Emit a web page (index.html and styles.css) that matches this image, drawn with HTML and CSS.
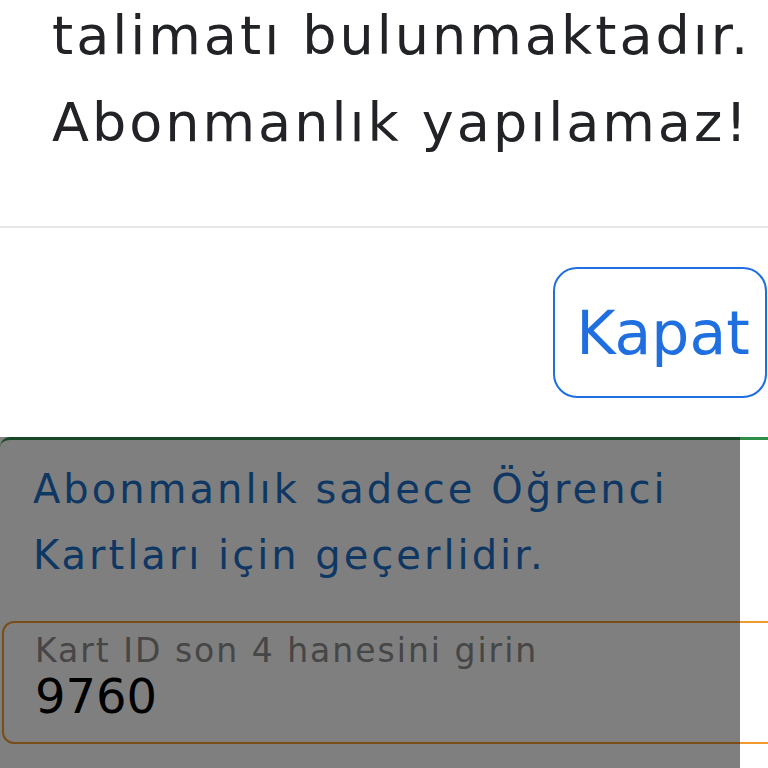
FILE: index.html
```html
<!DOCTYPE html>
<html lang="tr">
<head>
    <meta charset="UTF-8">
    <title>Abonmanlık</title>
    <link rel="stylesheet" href="styles.css">
</head>
<body>

<div class="modal">
    <div class="modal-body">
        <p class="modal-text">talimatı bulunmaktadır.<br>Abonmanlık yapılamaz!</p>
    </div>
    <div class="modal-footer">
        <span class="btnClose">Kapat</span>
    </div>
</div>

<div class="card">
    <p class="info">Abonmanlık sadece Öğrenci<br>Kartları için geçerlidir.</p>
    <div class="field">
        <label class="fieldLabel">Kart ID son 4 hanesini girin</label>
        <div class="fieldValue">9760</div>
    </div>
</div>

<div class="backdrop"></div>

</body>
</html>
```

FILE: styles.css
```css
* {
    padding: 0;
    margin: 0;
    box-sizing: border-box;
}
html, body {
    width: 768px;
    height: 768px;
    overflow: hidden;
}
body {
    position: relative;
    background: #ffffff;
    font-family: "DejaVu Sans", "Noto Sans", sans-serif;
}
.modal {
    background: #ffffff;
    width: 768px;
}
.modal .modal-body {
    padding: 0 0 0 52px;
    height: 226px;
    overflow: hidden;
}
.modal .modal-text {
    margin-top: -8px;
    font-size: 54px;
    line-height: 87px;
    letter-spacing: 3px;
    color: #222326;
    white-space: nowrap;
}
.modal .modal-footer {
    border-top: 2px solid #e6e6e6;
    height: 211px;
    display: flex;
    align-items: center;
    justify-content: flex-end;
    padding-right: 1px;
}
.modal .btnClose {
    width: 214px;
    height: 131px;
    border: 2px solid #1f6fe0;
    border-radius: 24px;
    color: #1f6fe0;
    font-size: 60px;
    display: flex;
    align-items: center;
    justify-content: center;
    padding-left: 6px;
    cursor: pointer;
}
.card {
    border-top: 3px solid #2f8f4a;
    border-top-left-radius: 10px;
    padding: 16px 0 0 33px;
    height: 331px;
}
.card .info {
    color: #1d6fc6;
    font-size: 40px;
    line-height: 66px;
    letter-spacing: 3px;
    white-space: nowrap;
}
.card .field {
    margin: 33px -40px 0 -31px;
    height: 123px;
    border: 2px solid #f39a2e;
    border-radius: 12px;
    background: #ffffff;
    padding: 9px 0 0 31px;
}
.card .fieldLabel {
    display: block;
    color: #8c8c8c;
    font-size: 33px;
    line-height: 38px;
    letter-spacing: 2px;
}
.card .fieldValue {
    color: #000000;
    font-size: 48px;
    line-height: 53px;
}
.backdrop {
    position: absolute;
    left: 0;
    top: 437px;
    width: 740px;
    bottom: 0;
    background: rgba(0, 0, 0, 0.5);
}
```
